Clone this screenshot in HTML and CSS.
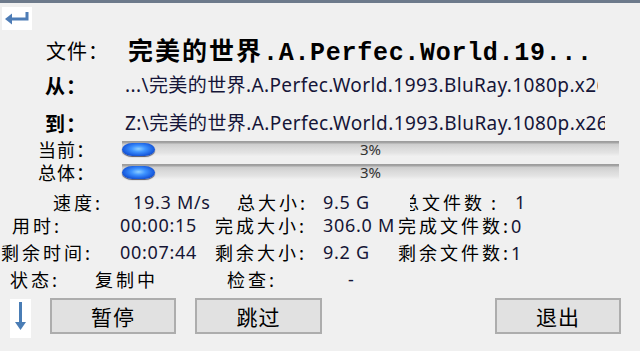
FILE: index.html
```html
<!DOCTYPE html>
<html lang="zh-CN">
<head>
<meta charset="utf-8">
<title>复制</title>
<link rel="stylesheet" href="styles.css">
</head>
<body>
<div class="topbar"></div>
<div class="win">
  <div class="ret">
    <svg width="30" height="23" viewBox="0 0 30 23">
      <path d="M25 5 V12 H9" fill="none" stroke="#4d7cb6" stroke-width="3"/>
      <polygon points="3,12 10,6.5 10,17.5" fill="#4d7cb6"/>
    </svg>
  </div>

  <div class="row r-file">
    <span class="lbl l-file">文件：</span>
    <span class="title"><span class="t-cn">完美的世界</span><span class="t-en">.A.Perfec.World.19...</span></span>
  </div>

  <div class="row r-from">
    <span class="lbl l-bold">从：</span>
    <span class="path p1">...\完美的世界.A.Perfec.World.1993.BluRay.1080p.x264</span>
  </div>

  <div class="row r-to">
    <span class="lbl l-bold">到：</span>
    <span class="path p2">Z:\完美的世界.A.Perfec.World.1993.BluRay.1080p.x264</span>
  </div>

  <div class="barrow b1">
    <span class="blbl">当前：</span>
    <div class="bar"><div class="chunk"></div><span class="pct">3%</span></div>
  </div>
  <div class="barrow b2">
    <span class="blbl">总体：</span>
    <div class="bar"><div class="chunk"></div><span class="pct">3%</span></div>
  </div>

  <div class="stats">
    <div class="srow s1">
      <span class="k pl53">速度:</span>
      <span class="v pl13">19.3 M/s</span>
      <span class="k pl22">总大小:</span>
      <span class="v">9.5 G</span>
      <span class="clip"><span class="k shift">总文件数<span class="colon">:</span></span></span>
      <span class="v pl3">1</span>
    </div>
    <div class="srow s2">
      <span class="k pl12">用时:</span>
      <span class="v">00:00:15</span>
      <span class="k">完成大小:</span>
      <span class="v">306.0 M</span>
      <span class="k span2">完成文件数:<span class="v">0</span></span>
    </div>
    <div class="srow s3">
      <span class="k pl1">剩余时间:</span>
      <span class="v">00:07:44</span>
      <span class="k">剩余大小:</span>
      <span class="v">9.2 G</span>
      <span class="k span2">剩余文件数:<span class="v">1</span></span>
    </div>
  </div>

  <div class="status">
    <span class="k st1">状态:</span>
    <span class="k st2">复制中</span>
    <span class="k st3">检查:</span>
    <span class="v">-</span>
  </div>

  <div class="buttons">
    <div class="down">
      <svg width="21" height="39" viewBox="0 0 21 39">
        <path d="M10.5 3 V24" fill="none" stroke="#4a7db5" stroke-width="3"/>
        <polygon points="5,23 16,23 10.5,31" fill="#4a7db5"/>
      </svg>
    </div>
    <button class="btn b-pause">暂停</button>
    <button class="btn b-skip">跳过</button>
    <button class="btn b-exit">退出</button>
  </div>
</div>
</body>
</html>
```
FILE: styles.css
```css
html, body {
  margin: 0;
  padding: 0;
}
body {
  width: 640px;
  height: 351px;
  overflow: hidden;
  background: #f0f0f0;
  font-family: "Noto Sans CJK SC", sans-serif;
  color: #000;
}
.topbar {
  height: 3px;
  background: #6d7a8b;
}
.win {
  display: flex;
  flex-direction: column;
}
.ret {
  margin: 4px 0 0 2px;
  width: 30px;
  height: 23px;
  background: #fff;
}
.ret svg, .down svg { display: block; }

.row {
  display: flex;
  align-items: center;
  white-space: nowrap;
}
.lbl {
  font-size: 20px;
  letter-spacing: 1px;
  line-height: 1;
}
.r-file {
  height: 28px;
  margin-top: 7px;
  padding-left: 46px;
}
.l-file { width: 82px; }
.title {
  font-weight: bold;
  line-height: 1;
}
.t-cn {
  font-size: 25px;
  letter-spacing: 2px;
  font-family: "Noto Sans CJK SC", sans-serif;
}
.t-en {
  font-size: 25px;
  letter-spacing: 0.7px;
  font-family: "Liberation Mono", "Noto Sans CJK SC", monospace;
}
.r-from {
  height: 30px;
  margin-top: 6px;
  padding-left: 45px;
}
.r-to {
  height: 30px;
  margin-top: 8px;
  padding-left: 45px;
}
.l-bold {
  width: 80px;
  font-weight: bold;
}
.path {
  font-family: "Noto Sans", "Noto Sans CJK SC", sans-serif;
  font-size: 19px;
  letter-spacing: 0.4px;
  line-height: 1;
  color: #151538;
  overflow: hidden;
  padding: 2px 0 4px;
}
.p1 { width: 473px; }
.p2 { width: 480px; }

.barrow {
  display: flex;
  align-items: center;
  height: 17px;
  padding-left: 38px;
}
.b1 { margin-top: 1px; }
.b2 { margin-top: 6px; }
.blbl {
  width: 84px;
  font-size: 18px;
  letter-spacing: 1px;
  line-height: 1;
}
.bar {
  position: relative;
  width: 497px;
  height: 16px;
  display: flex;
  align-items: center;
  background: linear-gradient(#9a9a9a 0, #a6a6a6 2px, #cdcdcd 3px, #d9d9d9 7px, #e4e4e4 12px, #ececec 14px, #f2f2f2 16px);
}
.chunk {
  width: 33px;
  height: 13px;
  margin-top: 2px;
  border-radius: 11px / 7px;
  background: radial-gradient(ellipse at 50% 45%, #8fd0ff 0%, #3f94ff 30%, #1a5ee0 65%, #0a2f9a 100%);
  box-shadow: 0 1px 1px rgba(20, 20, 40, 0.7);
}
.pct {
  position: absolute;
  left: 0;
  right: 0;
  top: 1px;
  text-align: center;
  font-family: "Noto Sans", sans-serif;
  font-size: 15px;
  line-height: 15px;
  color: #333;
}

.stats {
  margin-top: 10px;
  display: flex;
  flex-direction: column;
}
.srow {
  display: grid;
  grid-template-columns: 120px 95px 108px 75px 114px 1fr;
  align-items: center;
  white-space: nowrap;
}
.s1 { height: 23px; }
.s2 { height: 24px; }
.s3 { height: 30px; }
.k {
  font-size: 18px;
  letter-spacing: 3px;
  line-height: 1;
}
.v {
  font-family: "Noto Sans", "Noto Sans CJK SC", sans-serif;
  font-size: 18px;
  letter-spacing: 0.7px;
  line-height: 1;
  color: #151535;
}
.k .v { letter-spacing: 0; }
.pl53 { padding-left: 53px; }
.pl13 { padding-left: 13px; }
.pl22 { padding-left: 22px; }
.pl12 { padding-left: 12px; }
.pl3 { padding-left: 3px; }
.pl1 { padding-left: 1px; }
.clip {
  margin-left: 12px;
  width: 98px;
  overflow: hidden;
  display: flex;
}
.shift { margin-left: -9px; }
.colon { margin-left: 6px; }
.span2 { grid-column: 5 / span 2; }

.status {
  height: 24px;
  display: flex;
  align-items: center;
  padding-left: 10px;
  white-space: nowrap;
}
.st1 { width: 85px; }
.st2 { width: 132px; }
.st3 { width: 121px; }

.buttons {
  margin-top: 7px;
  display: flex;
  align-items: flex-start;
  padding-left: 10px;
}
.down {
  width: 21px;
  height: 39px;
  margin-top: 1px;
  background: #fff;
}
.btn {
  height: 36px;
  width: 126px;
  margin: 0;
  padding: 0;
  border: 2px solid #adadad;
  background: #e1e1e1;
  font-family: "Noto Sans CJK SC", sans-serif;
  font-size: 21px;
  letter-spacing: 1px;
  color: #000;
  line-height: 1;
}
.b-pause { margin-left: 19px; }
.b-skip { margin-left: 19px; width: 127px; }
.b-exit { margin-left: auto; margin-right: 19px; }
```
